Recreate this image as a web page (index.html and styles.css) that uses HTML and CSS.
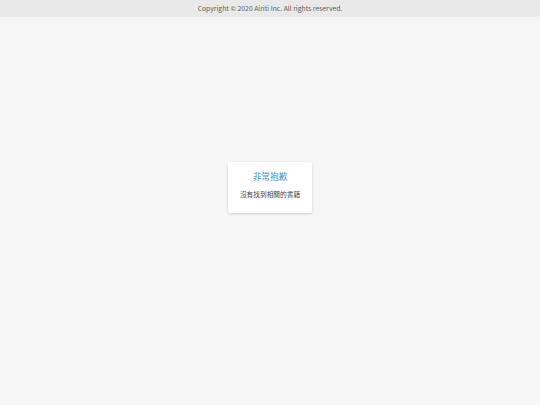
FILE: index.html
```html
<!DOCTYPE html>
<html lang="zh-Hant">
<head>
<meta charset="utf-8">
<link rel="stylesheet" href="styles.css">
</head>
<body>
<header class="topbar">Copyright © 2020 Airiti Inc. All rights reserved.</header>
<main class="content">
  <div class="card">
    <div class="card-title">非常抱歉</div>
    <div class="card-text">沒有找到相關的書籍</div>
  </div>
</main>
</body>
</html>
```
FILE: styles.css
```css
html, body {
  margin: 0;
  padding: 0;
  height: 100%;
}
body {
  background: #f6f6f6;
  font-family: "Noto Sans CJK TC", "Noto Sans", sans-serif;
  display: flex;
  flex-direction: column;
}
.topbar {
  height: 17px;
  line-height: 17px;
  background: #e9e9e9;
  color: #5a5a5a;
  font-size: 6.8px;
  text-align: center;
}
.content {
  flex: 1;
  display: flex;
  justify-content: center;
  padding-top: 145px;
}
.card {
  align-self: flex-start;
  width: 84px;
  height: 51px;
  box-sizing: border-box;
  background: #fff;
  border-radius: 2px;
  box-shadow: 0 1px 3px rgba(0,0,0,0.15);
  text-align: center;
  padding-top: 8px;
}
.card-title {
  color: #4a8fc9;
  font-size: 8.7px;
  line-height: 14px;
}
.card-text {
  color: #444;
  font-size: 6.7px;
  line-height: 12px;
  margin-top: 4px;
}
```
